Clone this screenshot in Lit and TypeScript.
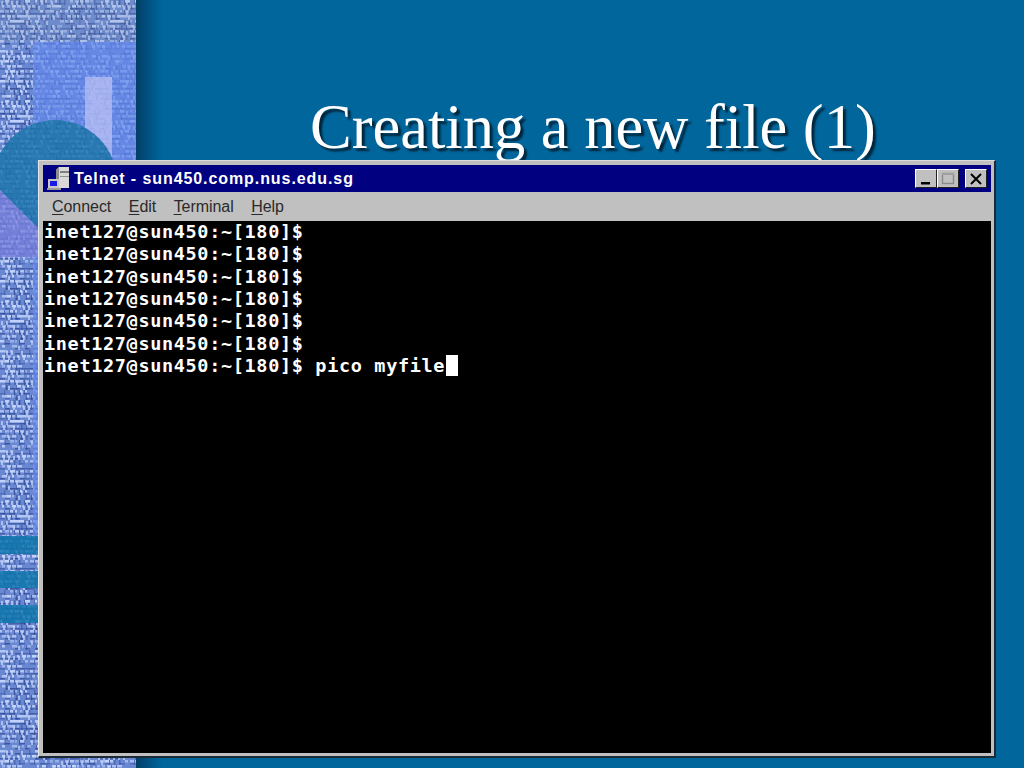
import { LitElement, html, css, svg } from "lit";
import { customElement } from "lit/decorators.js";

/* Woven-cloth texture: short light dashes over darker threads, broken up by cross threads. */
function weave(seed: number, w: number, h: number, light: string, dark: string, strength = 1) {
  let s = seed;
  const r = () => ((s = (s * 16807) % 2147483647) / 2147483647);
  const out: unknown[] = [];
  const cell = 5;
  for (let y = 0; y < h; y += cell) {
    const off = (y / cell) % 2 === 0 ? 0 : 2;
    for (let x = 0; x < w; x += cell) {
      if (r() < 0.55) {
        out.push(svg`<rect x=${x} y=${y + 3} width="5" height="1.5" fill=${dark} opacity=${((0.4 + r() * 0.4) * strength).toFixed(2)}/>`);
      }
      if (r() < 0.75) {
        out.push(svg`<rect x=${x + off} y=${y} width=${2 + Math.floor(r() * 4)} height="2.5" fill=${light} opacity=${((0.45 + r() * 0.55) * strength).toFixed(2)}/>`);
      }
      if (r() < 0.45) {
        out.push(svg`<rect x=${x + 4 + off} y=${y} width="1.5" height="5" fill=${dark} opacity=${((0.35 + r() * 0.4) * strength).toFixed(2)}/>`);
      }
      if (r() < 0.3) {
        out.push(svg`<rect x=${x + 1 + off} y=${y + 1} width="2" height="4" fill=${light} opacity=${(0.7 * strength).toFixed(2)}/>`);
      }
    }
  }
  return out;
}

@customElement("app-root")
export class AppRoot extends LitElement {
  static styles = css`
    :host { display: block; width: 1024px; height: 768px; overflow: hidden; }
    .slide {
      display: grid; width: 1024px; height: 768px;
      background: #00669c;
    }
    .backdrop { grid-area: 1 / 1; display: flex; overflow: hidden; }
    .art { width: 136px; height: 768px; display: block; flex: none; filter: blur(0.7px); }
    .fade { width: 26px; height: 768px; flex: none; background: linear-gradient(90deg, #013f66, #00669c); }
    .content {
      grid-area: 1 / 1; z-index: 1; display: flex; flex-direction: column; align-items: flex-start;
      padding: 87px 0 0 38px; min-width: 0;
    }
    h1 {
      margin: 0; width: 958px; height: 73px; padding-left: 272px; box-sizing: border-box;
      font: 400 62.5px/80px "Liberation Serif", "Times New Roman", serif;
      color: #fff; white-space: nowrap;
      text-shadow: 3px 3px 2px #02263c;
    }
    .win {
      width: 958px; height: 598px; box-sizing: border-box;
      background: #c0c0c0; padding: 4px 3px 3px 4px;
      border-top: 1px solid #dcdcdc; border-left: 1px solid #e8e8e8;
      border-right: 2px solid #1c2a38; border-bottom: 2px solid #1c2a38;
      display: flex; flex-direction: column;
    }
    .title {
      height: 27px; flex: none; background: #000080; color: #fff;
      display: flex; align-items: center; padding: 0 4px 0 3px;
    }
    .icon { width: 24px; height: 24px; flex: none; display: block; }
    .ttext {
      margin-left: 4px; font: 700 16px "Liberation Sans", Arial, sans-serif;
      letter-spacing: 0.92px; white-space: nowrap; flex: 1;
    }
    .btns { display: flex; align-items: center; }
    .btn {
      width: 22px; height: 19px; box-sizing: border-box; background: #c0c0c0;
      border-top: 1px solid #fff; border-left: 1px solid #fff;
      border-right: 1px solid #202020; border-bottom: 1px solid #202020;
      display: flex; align-items: center; justify-content: center;
    }
    .btn svg { display: block; width: 16px; height: 14px; }
    .close { margin-left: 6px; }
    .menu {
      height: 29px; flex: none; display: flex; align-items: center; gap: 17.5px;
      padding: 0 0 0 9px; color: #2a2a2a;
      font: 400 16px "Liberation Sans", Arial, sans-serif; letter-spacing: -0.05px;
    }
    .menu u { text-underline-offset: 2px; }
    .term {
      flex: 1; background: #000; color: #fff; min-height: 0;
      padding: 0 0 0 1px;
      font: 700 18.5px/22.33px "DejaVu Sans Mono", monospace; letter-spacing: 0.66px;
      white-space: nowrap;
    }
    .line { height: 22.33px; display: block; }
    .cursor { display: inline-block; width: 12px; height: 21px; background: #fff; margin-left: 1px; vertical-align: -4px; }
  `;

  render() {
    const lines = Array.from({ length: 6 }, () => "inet127@sun450:~[180]$");
    return html`<div class="slide">
      <div class="backdrop">
        <svg class="art" viewBox="0 0 136 768" preserveAspectRatio="none">
          <defs>
            <pattern id="w1" width="100" height="100" patternUnits="userSpaceOnUse">${weave(12345, 100, 100, "#c6d6fc", "#2f4794")}</pattern>
            <pattern id="w2" width="100" height="100" patternUnits="userSpaceOnUse">${weave(777, 100, 100, "#8fb0f6", "#4c6dcc", 0.6)}</pattern>
            <pattern id="w3" width="50" height="50" patternUnits="userSpaceOnUse">${weave(4242, 50, 50, "#3f8ec4", "#12659e", 0.5)}</pattern>
            <pattern id="w4" width="50" height="50" patternUnits="userSpaceOnUse">${weave(99, 50, 50, "#97a2ec", "#5c68c4", 0.6)}</pattern>
          </defs>
          <rect width="136" height="768" fill="#6a88d2"/>
          <rect width="136" height="768" fill="url(#w1)"/>
          <rect x="0" y="0" width="136" height="42" fill="#8094b8" opacity="0.22"/>
          <rect x="33" y="42" width="103" height="500" fill="#6688e4"/>
          <rect x="33" y="42" width="103" height="500" fill="url(#w2)"/>
          <rect x="85" y="77" width="27" height="90" fill="#a9b6f2"/>
          <rect x="85" y="77" width="27" height="90" fill="url(#w4)" opacity="0.35"/>
          <circle cx="55" cy="182" r="62" fill="#2a78b2"/>
          <circle cx="55" cy="182" r="62" fill="url(#w3)"/>
          <rect x="0" y="190" width="38" height="67" fill="#2a78b2"/>
          <rect x="0" y="190" width="38" height="67" fill="url(#w3)"/>
          <path d="M0 190 L38 228 V257 H0Z" fill="#7480d8"/>
          <path d="M0 190 L38 228 V257 H0Z" fill="url(#w4)"/>
          <rect x="0" y="536" width="38" height="18" fill="#1a78b0"/>
          <rect x="0" y="536" width="38" height="18" fill="url(#w3)"/>
          <rect x="0" y="571" width="38" height="17" fill="#1a78b0"/>
          <rect x="0" y="571" width="38" height="17" fill="url(#w3)"/>
          <rect x="0" y="605" width="38" height="18" fill="#1a78b0"/>
          <rect x="0" y="605" width="38" height="18" fill="url(#w3)"/>
        </svg>
        <div class="fade"></div>
      </div>
      <div class="content">
        <h1>Creating a new file (1)</h1>
        <div class="win">
          <div class="title">
            <svg class="icon" viewBox="0 0 24 24">
              <path d="M10 3 L13 0 H23 V21 H10Z" fill="#d8d8d8"/>
              <path d="M10 3 L13 0 V21 H10Z" fill="#8c8c8c"/>
              <rect x="14" y="4" width="9" height="2" fill="#808080"/>
              <rect x="14" y="9" width="9" height="1" fill="#909090"/>
              <rect x="2" y="12" width="11" height="9" fill="#c8c8c8"/>
              <rect x="4" y="14" width="7" height="5" fill="#1a1ae8"/>
              <rect x="1" y="21" width="14" height="2" fill="#9a9a9a"/>
            </svg>
            <span class="ttext">Telnet - sun450.comp.nus.edu.sg</span>
            <div class="btns">
              <div class="btn"><svg viewBox="0 0 16 14"><rect x="3" y="10" width="9" height="2.5" fill="#000"/></svg></div>
              <div class="btn"><svg viewBox="0 0 16 14"><rect x="2.5" y="1.5" width="11" height="10" fill="none" stroke="#8a8a8a" stroke-width="1.4"/><rect x="2" y="1" width="12" height="2" fill="#a0a0a0"/></svg></div>
              <div class="btn close"><svg viewBox="0 0 16 14"><path d="M3 2 L13 12 M13 2 L3 12" stroke="#000" stroke-width="2"/></svg></div>
            </div>
          </div>
          <div class="menu">
            <span><u>C</u>onnect</span><span><u>E</u>dit</span><span><u>T</u>erminal</span><span><u>H</u>elp</span>
          </div>
          <div class="term">
            ${lines.map((l) => html`<div class="line">${l}</div>`)}
            <div class="line">inet127@sun450:~[180]$ pico myfile<span class="cursor"></span></div>
          </div>
        </div>
      </div>
    </div>`;
  }
}
